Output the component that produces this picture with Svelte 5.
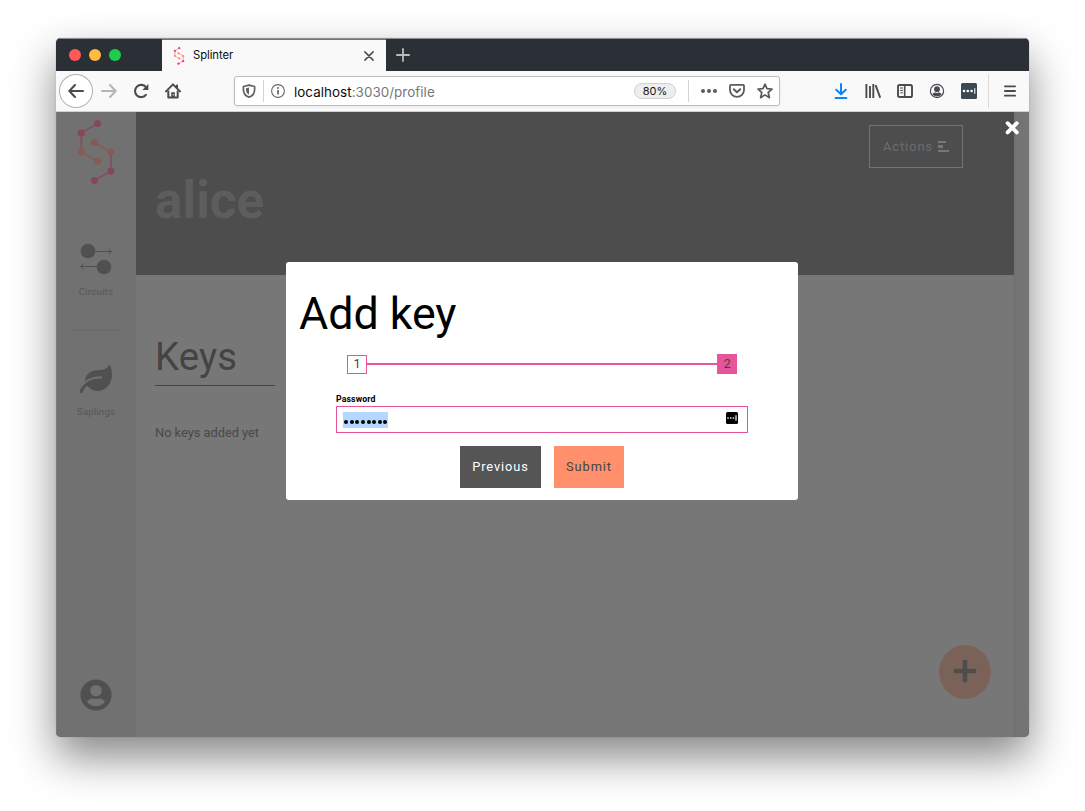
<script>
  const hosts = { name: 'localhost', rest: ':3030/profile' };
  const dots = Array.from({ length: 8 });
</script>

<div class="desktop">
  <div class="window">
    <div class="titlebar">
      <div class="lights"><i class="red"></i><i class="yellow"></i><i class="green"></i></div>
      <div class="tab">
        <svg class="favicon" width="12" height="18" viewBox="0 0 38 66" fill="#e0356f" stroke="#e0356f" stroke-width="2.4">
          <path d="M20 4 4 14V33" fill="none" opacity=".7" /><path d="M34 33V52L17 61" fill="none" opacity=".7" />
          <path d="M4 33 20 42M17 23 34 33" stroke="#f08a70" />
          <circle cx="20" cy="4" r="3" /><circle cx="4" cy="14" r="3" /><circle cx="34" cy="52" r="3" /><circle cx="17" cy="61" r="3" />
          <g fill="#f08a70" stroke="#f08a70"><circle cx="4" cy="33" r="3" /><circle cx="20" cy="42" r="3" /><circle cx="17" cy="23" r="3" /><circle cx="34" cy="33" r="3" /></g>
        </svg>
        <span class="tabname">Splinter</span>
        <svg width="10" height="10" viewBox="0 0 10 10" stroke="#4a4a4c" stroke-width="1.5" stroke-linecap="round"><path d="M.9.9 9.1 9.1M9.1.9.9 9.1" /></svg>
      </div>
      <svg class="newtab" width="14" height="14" viewBox="0 0 14 14" stroke="#b8babd" stroke-width="1.8" stroke-linecap="round"><path d="M7 .9V13.1M.9 7H13.1" /></svg>
    </div>

    <div class="toolbar">
      <div class="cell back">
        <svg width="16" height="16" viewBox="0 0 16 16" fill="none" stroke="#4a4a4f" stroke-width="2" stroke-linecap="round" stroke-linejoin="round"><path d="M15 8H1.5M7 2 1.3 8 7 14" /></svg>
      </div>
      <div class="cell">
        <svg width="16" height="16" viewBox="0 0 16 16" fill="none" stroke="#b5b5b7" stroke-width="2" stroke-linecap="round" stroke-linejoin="round"><path d="M1 8H14.5M9 2 14.7 8 9 14" /></svg>
      </div>
      <div class="cell">
        <svg width="16" height="16" viewBox="0 0 16 16" fill="none" stroke="#4a4a4f" stroke-width="2.1" stroke-linecap="round"><path d="M12.9 11.8A6.1 6.1 0 1 1 13 4.3" /><path d="M15.4 .9V6.9H9.4Z" fill="#4a4a4f" stroke="none" /></svg>
      </div>
      <div class="cell">
        <svg width="16" height="16" viewBox="0 0 16 16"><path d="M1 8.4 8 1.4 15 8.4M12 2.5V5" fill="none" stroke="#4a4a4f" stroke-width="2" stroke-linecap="round" stroke-linejoin="round" /><path d="M3.3 7.5V14.6H12.7V7.5" fill="none" stroke="#4a4a4f" stroke-width="2" stroke-linejoin="round" /><path d="M6.2 15V9.2H9.8V15Z" fill="#4a4a4f" /><rect x="7.6" y="11" width="1" height="1.6" fill="#ddd" /></svg>
      </div>

      <div class="urlbar">
        <svg class="shield" width="14" height="14" viewBox="0 0 14 14"><path d="M7 1.1 12.6 2.5V5.5C12.6 9.3 10.5 12 7 13.1 3.5 12 1.4 9.3 1.4 5.5V2.5Z" fill="none" stroke="#616165" stroke-width="1.7" stroke-linejoin="round" /><path d="M7 3.5V10.7C5 9.7 4 8 4 5.5V4.2Z" fill="#616165" /></svg>
        <b class="rule"></b>
        <svg class="info" width="14" height="14" viewBox="0 0 14 14"><circle cx="7" cy="7" r="6.4" fill="none" stroke="#656568" stroke-width="1.1" /><circle cx="7" cy="3.9" r="1" fill="#656568" /><path d="M7 6.1V10.6" stroke="#656568" stroke-width="1.7" /></svg>
        <span class="url">{hosts.name}<em>{hosts.rest}</em></span>
        <span class="pill">80%</span>
        <b class="rule wide"></b>
        <svg class="more" width="18" height="6" viewBox="0 0 18 6" fill="#5b5b5f"><circle cx="3" cy="3" r="2" /><circle cx="9" cy="3" r="2" /><circle cx="15" cy="3" r="2" /></svg>
        <svg class="pocket" width="16" height="16" viewBox="0 0 16 16" fill="none" stroke="#5b5b5f" stroke-width="1.8" stroke-linejoin="round" stroke-linecap="round"><path d="M2 1.8H14Q15 1.8 15 2.8V7A7 6.9 0 0 1 1 7V2.8Q1 1.8 2 1.8Z" /><path d="M4.8 6.2 8 9.2 11.2 6.2" stroke-width="2" /></svg>
        <svg class="star" width="16" height="16" viewBox="0 0 16 16" fill="none" stroke="#5b5b5f" stroke-width="1.7" stroke-linejoin="round"><path d="M8 1.1 10 5.6 15 6.1 11.2 9.5 12.4 14.7 8 11.9 3.6 14.7 4.8 9.5 1 6.1 6 5.6Z" /></svg>
      </div>

      <div class="cell first">
        <svg width="16" height="16" viewBox="0 0 16 16" fill="none" stroke="#0a84ff" stroke-width="2" stroke-linecap="round" stroke-linejoin="round"><path d="M8 1V11M3.2 6.7 8 11.3 12.8 6.7M2.6 15H13.4" /></svg>
      </div>
      <div class="cell">
        <svg width="16" height="16" viewBox="0 0 16 16" fill="none" stroke="#4a4a4f" stroke-width="1.9"><path d="M1.4 1V15M5 3V15M8.3 1V15M10.6 2.2 15.2 14.7" /></svg>
      </div>
      <div class="cell">
        <svg width="16" height="16" viewBox="0 0 16 16" fill="none" stroke="#4a4a4f" stroke-width="1.9"><rect x="1" y="2" width="14" height="12" rx="1.6" /><path d="M7.7 2V14" stroke-width="1.6" /><path d="M3 5H6M3 7.4H6M3.3 9.8H6" stroke-width="1" /></svg>
      </div>
      <div class="cell">
        <svg width="16" height="16" viewBox="0 0 16 16"><circle cx="8" cy="8" r="6.6" fill="none" stroke="#4a4a4f" stroke-width="1.2" /><circle cx="8" cy="6.2" r="2.9" fill="#4a4a4f" /><path d="M3.3 11.2Q4.5 9.2 6.4 9.5 8 10.4 9.6 9.5 11.5 9.2 12.7 11.2 11 13.5 8 13.5 5 13.5 3.3 11.2Z" fill="#4a4a4f" /></svg>
      </div>
      <div class="cell">
        <svg width="16" height="16" viewBox="0 0 16 16"><rect width="16" height="16" rx="1.5" fill="#3b4752" /><g fill="#fff"><circle cx="3" cy="8" r="1.3" /><circle cx="6.8" cy="8" r="1.3" /><circle cx="10.6" cy="8" r="1.3" /><rect x="13.3" y="5.2" width="1" height="5.6" /></g></svg>
      </div>
      <b class="menurule"></b>
      <div class="cell menu">
        <svg width="12" height="12" viewBox="0 0 12 12" stroke="#4a4a4f" stroke-width="1.8" stroke-linecap="round"><path d="M.9 1.3H11.1M.9 6H11.1M.9 10.7H11.1" /></svg>
      </div>
    </div>

    <div class="page">
      <nav class="sidebar">
        <svg class="logo" width="38" height="66" viewBox="77 119 38 66" stroke-width="1.9">
          <path d="M97.6 123.5 81.3 133V152M111 152V171L94.4 180.4" fill="none" stroke="#85505f" />
          <path d="M81.3 152 97.6 161.3M94.4 142.4 111 152" stroke="#855d54" />
          <g fill="#85485a"><circle cx="97.6" cy="123.5" r="3.5" /><circle cx="81.3" cy="133" r="3.5" /><circle cx="111" cy="171" r="3.5" /><circle cx="94.4" cy="180.4" r="3.5" /></g>
          <g fill="#855b54"><circle cx="81.3" cy="152" r="3.5" /><circle cx="97.6" cy="161.3" r="3.5" /><circle cx="94.4" cy="142.4" r="3.5" /><circle cx="111" cy="152" r="3.5" /></g>
        </svg>
        <div class="navitem circuits">
          <svg width="34" height="32" viewBox="79 243 34 32" fill="none" stroke="#505050" stroke-width="1"><circle cx="88" cy="251" r="7.3" fill="#505050" stroke="none" /><circle cx="104" cy="267" r="7.3" fill="#505050" stroke="none" /><path d="M95 251.5H111.3M108.5 248.8 111.4 251.5 108.5 254.2M97 266.5H80.7M83.5 263.8 80.6 266.5 83.5 269.2" /></svg>
          <span>Circuits</span>
        </div>
        <hr />
        <div class="navitem saplings">
          <svg width="34" height="30" viewBox="79 364 34 30"><path d="M109.4 364.8C110.8 366 112 370 112 374.5 112 384 105.8 391 97.5 391 92.8 391 89.8 389 87.3 385.8 84.5 387.7 83.6 390 82.8 392 82 393.5 80 393.3 79.8 391.8 80 388.8 83.7 384.5 87.5 381.8 91.5 379 96.5 378.2 101.3 378.5 102.8 378.5 102.8 376.7 101.3 376.6 95.5 376 89.5 377.7 84.9 381.3 85 375.7 89.8 370.7 95.7 370.4 101 370 106.5 370.3 109.4 364.8Z" fill="#505050" /></svg>
          <span>Saplings</span>
        </div>
        <svg class="account" width="32" height="32" viewBox="0 0 32 32"><circle cx="16" cy="16" r="15.6" fill="#505050" /><circle cx="16" cy="11.6" r="5.7" fill="#717171" /><path d="M7 22.7C9.5 19.5 12 19.2 13.7 19.7Q16 20.5 18.3 19.7C20 19.2 22.5 19.5 25 22.7 22.7 26 19.5 27.3 16 27.3S9.3 26 7 22.7Z" fill="#717171" /></svg>
      </nav>
      <main>
        <header>
          <h1>alice</h1>
          <div class="actions">Actions
            <svg width="11" height="11" viewBox="0 0 11 11" fill="#767676"><rect x="0" y="0" width="8" height="2" /><rect x="0" y="4" width="5" height="3" /><rect x="0" y="9" width="11" height="2" /></svg>
          </div>
        </header>
        <section>
          <h2>Keys</h2>
          <p>No keys added yet</p>
        </section>
        <div class="fab">
          <svg width="24" height="24" viewBox="0 0 24 24" fill="#4d4d4d"><rect x="9.7" y="0.8" width="4.6" height="22.4" rx="1.5" /><rect x="0.8" y="9.7" width="22.4" height="4.6" rx="1.5" /></svg>
        </div>
      </main>
      <div class="scroll"></div>

      <svg class="close" width="16" height="16" viewBox="0 0 16 16" stroke="#fff" stroke-width="3.8" stroke-linecap="round"><path d="M3.6 3.2 12.8 12.4M12.8 3.2 3.6 12.4" /></svg>

      <div class="modal">
        <h3>Add key</h3>
        <div class="steps"><span class="step">1</span><span class="line"></span><span class="step on">2</span></div>
        <div class="field">
          <div class="label">Password</div>
          <div class="input">
            <span class="selection">{#each dots as _}<i></i>{/each}</span>
            <svg width="12" height="12" viewBox="0 0 12 12"><rect width="12" height="12" rx="1.5" /><g fill="#fff"><circle cx="2" cy="6" r=".85" /><circle cx="4.7" cy="6" r=".85" /><circle cx="7.4" cy="6" r=".85" /></g><path d="M10 3.3V8.7" stroke="#999" stroke-width="2" /></svg>
          </div>
        </div>
        <div class="buttons"><div class="btn prev">Previous</div><div class="btn submit">Submit</div></div>
      </div>
    </div>
  </div>
</div>

<style>
  :global(body) { background: #fff; }
  .desktop { box-sizing: border-box; width: 1085px; height: 811px; padding: 38px 56px 0; overflow: hidden; font-family: Roboto, sans-serif; }
  .window { display: flex; flex-direction: column; width: 973px; height: 699px; border-radius: 5px; overflow: hidden; background: #777; box-shadow: 0 0 1px rgba(0, 0, 0, 0.4), 0 20px 44px rgba(0, 0, 0, 0.48); }
  svg { display: block; flex: none; }
  h1, h2, h3, p, hr { margin: 0; font-weight: 400; }

  .titlebar { display: flex; align-items: center; box-sizing: border-box; height: 33px; flex: none; background: #2b2f36; border-top: 1px solid #8b8e92; }
  .lights { display: flex; gap: 8px; width: 93px; padding-left: 13px; }
  .lights i { width: 12px; height: 12px; border-radius: 50%; }
  .red { background: #ff5a55; }
  .yellow { background: #ffbb40; }
  .green { background: #1fcc4b; }
  .tab { display: flex; align-items: center; box-sizing: border-box; width: 224px; height: 32px; padding: 1px 12px 0 11px; background: #f9f9fa; border-top: 1px solid #1c86ea; }
  .tab > svg { margin-top: -1px; }
  .tabname { flex: 1; padding-left: 8px; margin-top: -1px; font: 11.3px/15px Inter, sans-serif; letter-spacing: -0.08px; color: #0c0c0d; }
  .newtab { margin: -1px 0 0 10px; }

  .toolbar { display: flex; align-items: center; box-sizing: border-box; height: 41px; flex: none; padding-left: 4px; background: #f9f9fa; border-bottom: 1px solid #d0d0d0; }
  .cell { display: flex; align-items: center; justify-content: center; width: 32px; height: 32px; flex: none; }
  .back { border-radius: 50%; margin-right: 1px; background: #fff; box-shadow: 0 0 0 1px #b0b0b2; }
  .urlbar { display: flex; align-items: center; box-sizing: border-box; width: 546px; height: 30px; margin-left: 45px; padding-left: 7px; border: 1px solid #bcbcbe; border-radius: 3px; background: #fff; box-shadow: 0 1px 3px rgba(0, 0, 0, 0.06); }
  .rule { width: 1px; height: 22px; margin-left: 7px; background: #d4d4d6; }
  .info { margin-left: 7px; }
  .url { flex: 1; padding: 2px 0 0 9px; font: 13.4px/18px Inter, sans-serif; letter-spacing: 0.05px; color: #0c0c0d; }
  .url em { font-style: normal; color: #77777a; }
  .pill { box-sizing: border-box; width: 42px; height: 16px; border: 1px solid #cfcfcf; border-radius: 8px; background: #eee; font: 11px/14px Inter, sans-serif; text-align: center; color: #18181a; }
  .wide { margin-left: 12px; }
  .more { margin-left: 11px; }
  .pocket { margin-left: 11px; }
  .star { margin: 0 6px 0 12px; }
  .first { margin-left: 45px; }
  .menurule { width: 1px; height: 34px; margin-left: 3px; background: #d9d9da; }
  .menu { margin-left: 5px; }

  .page { position: relative; display: flex; flex: 1; min-height: 0; }
  .sidebar { display: flex; flex-direction: column; align-items: center; width: 80px; flex: none; background: #717171; box-shadow: inset 1px 0 #7c7c7c; }
  .logo { margin-top: 7px; }
  .navitem { display: flex; flex-direction: column; align-items: center; font-size: 9.8px; line-height: 12px; letter-spacing: 0.15px; color: #565656; }
  .circuits { margin-top: 58px; }
  .circuits span { margin-top: 11px; }
  hr { width: 48px; height: 1px; margin-top: 32px; border: 0; background: #696969; }
  .saplings { margin-top: 33px; }
  .saplings span { margin-top: 12px; }
  .account { margin: auto 0 26px; }
  main { display: flex; flex-direction: column; width: 878px; background: #777; }
  header { display: flex; align-items: flex-start; justify-content: space-between; box-sizing: border-box; height: 163px; padding: 13px 51px 0 19px; background: #4d4d4d; }
  h1 { margin-top: 46px; font-size: 51.2px; line-height: 60px; font-weight: 700; letter-spacing: 0.1px; color: #5d5d5d; }
  .actions { display: flex; align-items: center; justify-content: center; gap: 5px; box-sizing: border-box; width: 94px; height: 43px; border: 1px solid #747474; font-size: 12.8px; letter-spacing: 0.95px; color: #6c6c6c; }
  section { padding: 55px 19px 0; }
  h2 { width: 120px; height: 55px; border-bottom: 1px solid #444; font-size: 38.4px; line-height: 53px; letter-spacing: 0.15px; color: #444; }
  p { margin-top: 37px; font-size: 12.8px; line-height: 20px; color: #494949; }
  .fab { display: flex; align-items: center; justify-content: center; box-sizing: border-box; width: 52px; height: 54px; margin: auto 23px 38px auto; padding-bottom: 2px; border-radius: 50%; background: #7b6259; }
  .scroll { flex: 1; background: #747474; box-shadow: inset 1px 0 #6e6e6e; }

  .close { position: absolute; right: 9px; top: 8px; }
  .modal { position: absolute; left: 230px; top: 150px; display: flex; flex-direction: column; box-sizing: border-box; width: 512px; height: 238px; border-radius: 3px; background: #fff; }
  h3 { margin: 22px 0 0 13px; font-size: 44.8px; line-height: 60px; letter-spacing: -0.05px; color: #000; }
  .steps { display: flex; align-items: center; width: 390px; height: 20px; margin: 10px 0 0 61px; }
  .step { box-sizing: border-box; width: 20px; height: 19px; border: 1px solid #e6559a; font-size: 12.8px; line-height: 16px; text-align: center; color: #444; }
  .on { height: 20px; background: #e6559a; line-height: 18px; }
  .line { flex: 1; height: 2px; background: #e6559a; }
  .field { width: 412px; margin: 19px 0 0 50px; }
  .label { font-size: 8.7px; line-height: 12px; font-weight: 700; letter-spacing: 0.15px; color: #000; }
  .input { display: flex; align-items: center; justify-content: space-between; box-sizing: border-box; height: 27px; margin-top: 1px; padding: 0 9px 0 6px; border: 1px solid #e6559a; }
  .input svg { margin-top: -3px; }
  .selection { display: flex; align-items: center; box-sizing: border-box; gap: 1.65px; width: 45px; height: 16px; padding: 3px 0 0 1px; margin-top: 1px; background: #b3d7ff; }
  .selection i { width: 4px; height: 4px; flex: none; border-radius: 50%; background: #000; }
  .buttons { display: flex; gap: 13px; margin: 13px 0 0 174px; }
  .btn { height: 42px; font-size: 12.8px; line-height: 41px; letter-spacing: 0.9px; text-align: center; }
  .prev { width: 81px; background: #555; color: #fff; }
  .submit { width: 70px; background: #ff906b; color: #444; }
</style>
